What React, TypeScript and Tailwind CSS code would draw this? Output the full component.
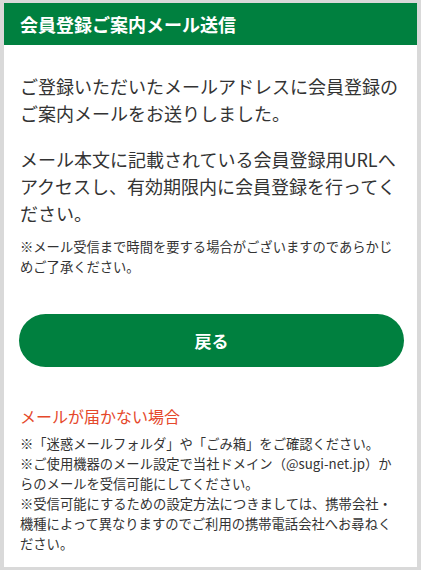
export default function App() {
  const notes = [
    "※「迷惑メールフォルダ」や「ごみ箱」をご確認ください。",
    "※ご使用機器のメール設定で当社ドメイン（@sugi-net.jp）からのメールを受信可能にしてください。",
    "※受信可能にするための設定方法につきましては、携帯会社・機種によって異なりますのでご利用の携帯電話会社へお尋ねください。",
  ];

  return (
    <div
      className="min-h-screen w-full bg-[#d9d9d9] px-[4px] py-[3px]"
      style={{ fontFamily: '"Noto Sans CJK JP", "Noto Sans", sans-serif' }}
    >
      <div className="flex min-h-[564px] flex-col bg-white">
        <div className="flex h-[42px] items-center bg-[#00803f] pl-4 pr-[13px]">
          <h1 className="text-[18px] font-bold leading-none text-white">
            会員登録ご案内メール送信
          </h1>
        </div>

        <div className="flex flex-col pl-[15px] pr-[13px] pt-[28px] pb-3 text-[#333333]">
          <p className="pl-px text-[18px] leading-[27px]">
            ご登録いただいたメールアドレスに会員登録のご案内メールをお送りしました。
          </p>
          <p className="mt-[19px] pl-px text-[18px] leading-[27px]">
            メール本文に記載されている会員登録用URLへアクセスし、有効期限内に会員登録を行ってください。
          </p>
          <p className="mt-[10px] pl-px text-[13.3px] leading-[20px]">
            ※メール受信まで時間を要する場合がございますのであらかじめご了承ください。
          </p>

          <button className="mt-[37px] flex h-[53px] w-full items-center justify-center rounded-full bg-[#00803f] text-[17px] font-bold text-white">
            戻る
          </button>

          <h2 className="mt-[37px] pl-px text-[16px] leading-[24px] text-[#e5482b]">
            メールが届かない場合
          </h2>
          <div className="mt-[6px] flex flex-col pl-px text-[13.3px] leading-[20px]">
            {notes.map((note, index) => (
              <p key={index}>{note}</p>
            ))}
          </div>
        </div>
      </div>
    </div>
  );
}
